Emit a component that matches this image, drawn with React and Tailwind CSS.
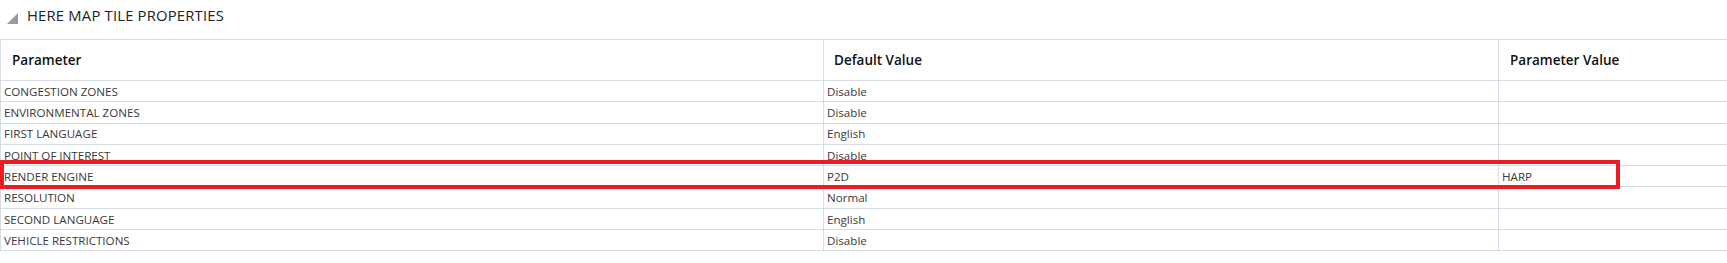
const rows = [
  { name: "CONGESTION ZONES", def: "Disable", val: "" },
  { name: "ENVIRONMENTAL ZONES", def: "Disable", val: "" },
  { name: "FIRST LANGUAGE", def: "English", val: "" },
  { name: "POINT OF INTEREST", def: "Disable", val: "" },
  { name: "RENDER ENGINE", def: "P2D", val: "HARP", marked: true },
  { name: "RESOLUTION", def: "Normal", val: "" },
  { name: "SECOND LANGUAGE", def: "English", val: "" },
  { name: "VEHICLE RESTRICTIONS", def: "Disable", val: "" },
];

const App = () => {
  return (
    <div
      className="w-[1727px] h-[263px] bg-white overflow-hidden text-[#333]"
      style={{ fontFamily: '"Open Sans", "Noto Sans", sans-serif' }}
    >
      <div className="flex items-center h-[39px] pl-[7px] pb-[8px]">
        <svg width="11" height="11" viewBox="0 0 11 11" className="mt-[6px]">
          <polygon points="11,0 11,11 0,11" fill="#9a9a9a" />
        </svg>
        <span className="ml-[9px] text-[14.8px] text-[#222] tracking-[0.2px]">
          HERE MAP TILE PROPERTIES
        </span>
      </div>

      <div className="relative">
        <table className="w-[1740px] border-collapse table-fixed">
          <colgroup>
            <col className="w-[823px]" />
            <col className="w-[675px]" />
            <col />
          </colgroup>
          <thead>
            <tr className="h-[41px]">
              <th className="border border-[#d6dde6] border-r-0 text-left font-semibold text-[13.5px] text-[#111] pl-[11px]">
                Parameter
              </th>
              <th className="border border-[#d6dde6] text-left font-semibold text-[13.5px] text-[#111] pl-[10px]">
                Default Value
              </th>
              <th className="border border-[#d6dde6] text-left font-semibold text-[13.5px] text-[#111] pl-[11px]">
                Parameter Value
              </th>
            </tr>
          </thead>
          <tbody>
            {rows.map((r) => (
              <tr key={r.name} className="h-[21.3px]">
                <td className="border border-[#d6dde6] border-r-0 text-[11.6px] leading-none pl-[3px] pt-[1px] text-[#3a3a3a]">
                  {r.name}
                </td>
                <td className="border border-[#d6dde6] text-[11.6px] leading-none pl-[3px] pt-[1px] text-[#3a3a3a]">
                  {r.def}
                </td>
                <td className="border border-[#d6dde6] text-[11.6px] leading-none pl-[3px] pt-[1px] text-[#3a3a3a]">
                  {r.val}
                </td>
              </tr>
            ))}
          </tbody>
        </table>
        <div className="absolute left-0 top-[121px] w-[1620px] h-[29px] border-[4px] border-[#ed1c24] pointer-events-none" />
      </div>
    </div>
  );
};

export default App;
